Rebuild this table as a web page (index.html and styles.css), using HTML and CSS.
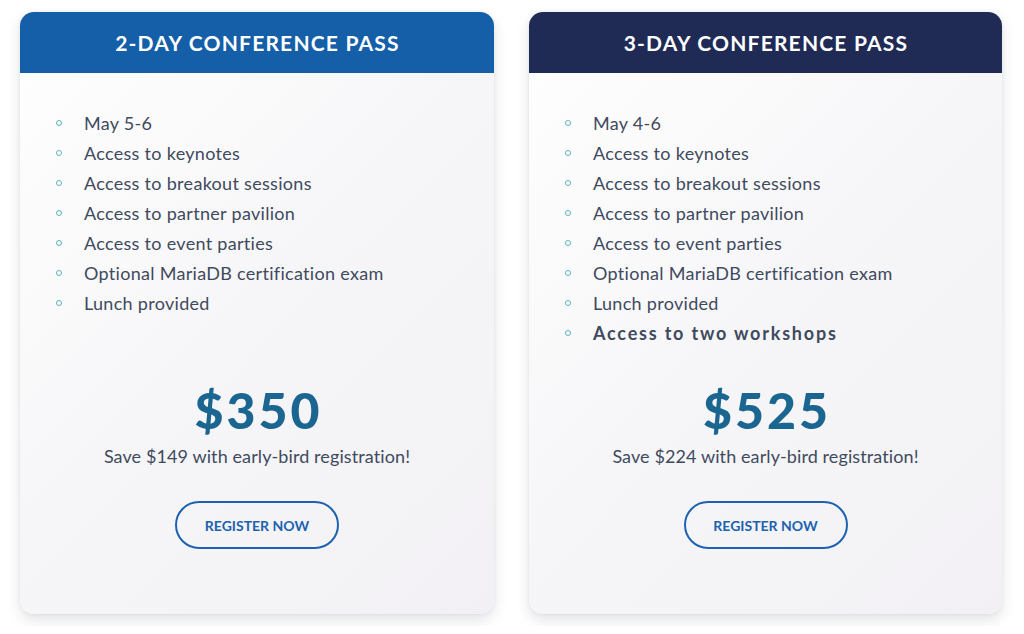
FILE: index.html
```html
<!DOCTYPE html>
<html lang="en">
<head>
  <meta charset="UTF-8">
  <meta name="viewport" content="width=device-width, initial-scale=1.0">
  <title>Conference Passes</title>
  <link rel="stylesheet" href="styles.css">
</head>
<body>
  <div class="passes">

    <div class="card">
      <div class="card-head two-day">2-Day Conference Pass</div>
      <ul class="perks">
        <li>May 5-6</li>
        <li>Access to keynotes</li>
        <li>Access to breakout sessions</li>
        <li>Access to partner pavilion</li>
        <li>Access to event parties</li>
        <li>Optional MariaDB certification exam</li>
        <li>Lunch provided</li>
      </ul>
      <div class="price">$350</div>
      <p class="save">Save $149 with early-bird registration!</p>
      <div class="register">
        <button type="button" class="register-btn">Register Now</button>
      </div>
    </div>

    <div class="card">
      <div class="card-head three-day">3-Day Conference Pass</div>
      <ul class="perks">
        <li>May 4-6</li>
        <li>Access to keynotes</li>
        <li>Access to breakout sessions</li>
        <li>Access to partner pavilion</li>
        <li>Access to event parties</li>
        <li>Optional MariaDB certification exam</li>
        <li>Lunch provided</li>
        <li class="extra">Access to two workshops</li>
      </ul>
      <div class="price">$525</div>
      <p class="save">Save $224 with early-bird registration!</p>
      <div class="register">
        <button type="button" class="register-btn">Register Now</button>
      </div>
    </div>

  </div>
</body>
</html>
```

FILE: styles.css
```css
body {
  margin: 0;
  background-color: white;
  font-family: Lato, "Open Sans", Arial, sans-serif;
  color: #3f4a5e;
}

.passes {
  display: flex;
  gap: 35px;
  padding: 12px 20px;
}

.card {
  display: flex;
  flex-direction: column;
  width: 474px;
  height: 602px;
  border-radius: 14px;
  overflow: hidden;
  background: linear-gradient(135deg, #ffffff 0%, #f6f6f8 50%, #f2f0f4 100%);
  box-shadow: 0 6px 14px rgba(30, 40, 60, 0.13), 0 0 4px rgba(30, 40, 60, 0.06);
}
.card + .card {
  width: 473px;
}

.card-head {
  height: 61px;
  display: flex;
  align-items: center;
  justify-content: center;
  padding-left: 1px;
  color: white;
  font-size: 21px;
  font-weight: 700;
  text-transform: uppercase;
  letter-spacing: 1.2px;
}
.two-day {
  background-color: #155ea8;
}
.three-day {
  background-color: #1f2b55;
}

.perks {
  list-style: none;
  margin: 35px 0 0;
  padding: 0 0 0 36px;
  min-height: 240px;
}
.perks li {
  display: flex;
  align-items: center;
  gap: 22px;
  height: 30px;
  font-size: 18px;
  letter-spacing: 0.3px;
}
.perks li::before {
  content: "";
  width: 4px;
  height: 4px;
  border: 1.5px solid #5eb2c1;
  border-radius: 50%;
  flex-shrink: 0;
}
.perks .extra {
  font-weight: 700;
  letter-spacing: 1.8px;
}

.price {
  margin-top: 36px;
  padding-left: 3px;
  line-height: 52px;
  text-align: center;
  font-size: 50px;
  font-weight: 900;
  letter-spacing: 3px;
  color: #1b6690;
}

.save {
  margin: 8px 0 0;
  line-height: 24px;
  text-align: center;
  font-size: 18px;
  letter-spacing: 0.1px;
}

.register {
  margin-top: 33px;
  text-align: center;
}
.register-btn {
  width: 164px;
  height: 48px;
  border: 2px solid #1c62b0;
  border-radius: 24px;
  background: transparent;
  color: #1c62b0;
  font-family: Lato, Arial, sans-serif;
  font-size: 14px;
  font-weight: 700;
  text-transform: uppercase;
}
```
